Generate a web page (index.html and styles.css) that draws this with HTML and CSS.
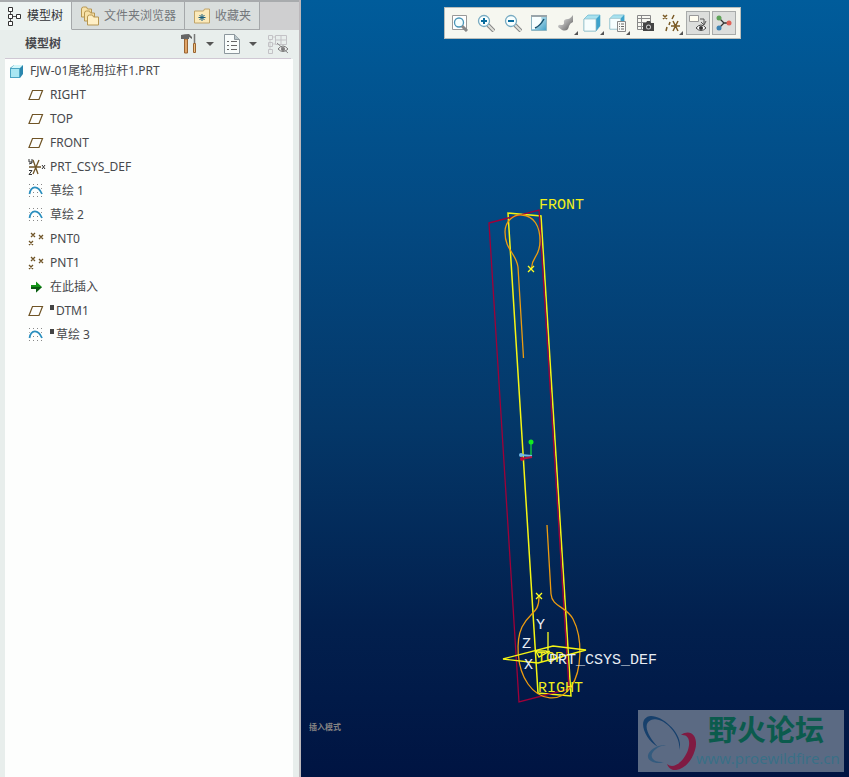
FILE: index.html
```
<!DOCTYPE html>
<html lang="zh-CN">
<head>
<meta charset="utf-8">
<title>模型树</title>
<link rel="stylesheet" href="styles.css">
</head>
<body>
<svg class="defs" aria-hidden="true">
  <defs>
    <linearGradient id="cyan" x1="0" y1="0" x2="1" y2="1"><stop offset="0" stop-color="#f4feff"/><stop offset="1" stop-color="#3f9fc6"/></linearGradient>
    <linearGradient id="metal" x1="0" y1="0" x2="1" y2="1"><stop offset="0" stop-color="#fff"/><stop offset=".5" stop-color="#aaa"/><stop offset="1" stop-color="#555"/></linearGradient>
    <symbol id="plane" viewBox="0 0 16 16"><path d="M4.500 3.500h10L11 12.500H1z" fill="none" stroke="#6f5426" stroke-width="1.200"/></symbol>
    <symbol id="sketch" viewBox="0 0 16 16"><path d="M1 1.500h14M1 5.500h14M1 9.500h14M1 13.500h14" stroke="#888" stroke-dasharray="1 3"/><path d="M1.500 11.500C3 2 11 2 14 11.500" fill="none" stroke="#fff" stroke-width="4"/><path d="M1.500 11C3 2.500 10 2 14 11" fill="none" stroke="#2b8fbe" stroke-width="1.800"/></symbol>
    <symbol id="points" viewBox="0 0 16 16"><path d="M3 2l4 4m0-4L3 6M11 4l4 4m0-4l-4 4M1 10l4 4m0-4l-4 4" stroke="#6f5426" stroke-width="1.300"/></symbol>
    <symbol id="csys" viewBox="0 0 18 18"><path d="M1 9h12M5 2l5 14M11 2L5 16" stroke="#6f5426" stroke-width="1.300"/><path d="M1 1v3h3M4 1v4L1 6M14 7l3 4m0-4l-3 4M1 12.500h3l-3 4h3" fill="none" stroke="#333"/></symbol>
    <symbol id="cube" viewBox="0 0 18 18"><path d="M1 5l4-4h12v11l-4 5H1z" fill="#a8e1ee" stroke="#69b5cf" stroke-width=".7"/><path d="M13 5l4-4v11l-4 5z" fill="#3da3cc"/><path d="M1 5h12v12H1z" fill="#f6fefe" stroke="#94bcc5" stroke-width=".7"/></symbol>
    <symbol id="lens" viewBox="0 0 18 18"><path d="M11 11l6 6" stroke="#858585" stroke-width="4"/><path d="M11 11l6 6" stroke="#e0e0d8" stroke-width="2"/><circle cx="7" cy="7" r="5.500" fill="#f8ffff" stroke="#78abc2" stroke-width="1.300"/></symbol>
  </defs>
</svg>
<main class="app">
  <aside class="panel">
    <nav class="tabs">
      <button class="tab active"><svg width="16" height="20" viewBox="0 0 16 20"><path d="M3.500 6v9M6 10.500h3" stroke="#555"/><path d="M1.500 1.500h4v4h-4zM1.500 8.500h4v4h-4zM1.500 15.500h4v4h-4zM9.500 8.500h4v4h-4z" fill="#fff" stroke="#333"/></svg>模型树</button>
      <button class="tab"><svg width="20" height="20" viewBox="0 0 20 20"><g fill="#f8e2a8" stroke="#b79752"><path d="M1.500 11V3q0-2 2-2h3l1 2h4v8z"/><path d="M4.500 15V7q0-2 2-2h3l1 2h4v8z"/><path d="M7.500 19v-8q0-2 2-2h3l1 2h5v8z" fill="#fff0c6"/></g></svg>文件夹浏览器</button>
      <button class="tab"><svg width="18" height="18" viewBox="0 0 18 18"><path d="M1.500 16V4h9l1-2h5v14z" fill="#fbe9b9" stroke="#c1a468"/><path d="M9 7v7M5.500 10.500h7M6.500 8l5 5m0-5l-5 5" stroke="#165c7e"/></svg>收藏夹</button>
    </nav>
    <header class="tree-head">
      <h1>模型树</h1>
      <div class="tools">
        <button class="tool" aria-label="设置"><svg width="18" height="22" viewBox="0 0 18 22"><path d="M4.500 6h3v14h-3z" fill="#e0a468" stroke="#9a6431"/><path d="M1 6V2q4-1 8-1l3 3v2l-3-2v2H3.500z" fill="#666"/><path d="M14.500 1v9" stroke="#777" stroke-width="1.500"/><path d="M13.500 10.500h2v9h-2z" fill="#edc183" stroke="#9a6431"/></svg><i class="caret"></i></button>
        <button class="tool" aria-label="显示"><svg width="17" height="20" viewBox="0 0 17 20"><path d="M.500 .500h10l5 5v14H.500z" fill="#f8fcfb" stroke="#8c979d"/><path d="M10.500 .500v5h5" fill="#b8c6ca" stroke="#8c979d"/><path d="M7 7.500h6M7 11.500h6M7 15.500h6M3 7.500h2M3 11.500h2M3 15.500h2" stroke="#666"/></svg><i class="caret"></i></button>
        <button class="tool" aria-label="隐藏"><svg width="22" height="20" viewBox="0 0 22 20"><path d="M3 5v11M5 3h3M5 10h3" stroke="#ccc"/><path d="M1.500 1.500h4v4h-4zM1.500 8.500h4v4h-4zM1.500 15.500h4v4h-4zM8.500 1.500h11v9h-11zM14 1.500v9M8.500 6h11" fill="none" stroke="#c3c2c6"/><path d="M11 15q5-6 10 0-5 5-10 0z" fill="#eee" stroke="#777"/><circle cx="16" cy="15" r="2" fill="#777"/><path d="M10 9l11 10" stroke="#888"/></svg></button>
      </div>
    </header>
    <ul class="tree">
      <li class="root"><svg width="15" height="15"><path d="M1 4l4-3h9v9l-3 4H1z" fill="#2b87ae"/><path d="M1.500 4.500h9v9h-9z" fill="#a9e7f2" stroke="#4ba5c3"/><path d="M2 4l3-3h9l-3 3z" fill="#d4f7fa"/></svg>FJW-01尾轮用拉杆1.PRT</li>
      <li><svg width="16" height="16"><use href="#plane"/></svg>RIGHT</li>
      <li><svg width="16" height="16"><use href="#plane"/></svg>TOP</li>
      <li><svg width="16" height="16"><use href="#plane"/></svg>FRONT</li>
      <li class="wide"><svg width="18" height="18"><use href="#csys"/></svg>PRT_CSYS_DEF</li>
      <li><svg width="16" height="16"><use href="#sketch"/></svg>草绘 1</li>
      <li><svg width="16" height="16"><use href="#sketch"/></svg>草绘 2</li>
      <li><svg width="16" height="16"><use href="#points"/></svg>PNT0</li>
      <li><svg width="16" height="16"><use href="#points"/></svg>PNT1</li>
      <li><svg width="16" height="16"><path d="M3 6h5V2.500l6 5.500-6 5.500V10H3z" fill="#149318"/><path d="M3 8h11l-6 5.500V10H3z" fill="#0c5a13"/></svg>在此插入</li>
      <li><svg width="16" height="16"><use href="#plane"/></svg><i class="mark"></i>DTM1</li>
      <li><svg width="16" height="16"><use href="#sketch"/></svg><i class="mark"></i>草绘 3</li>
    </ul>
  </aside>
  <section class="view">
    <svg class="model" viewBox="301 0 548 777" role="img" aria-label="FJW-01">
      <g fill="none" stroke-width="1.300">
        <path d="M571 696L541 216L508 213L538 693Z" stroke="#f5f514" stroke-width="1.500"/>
        <path d="M489 223L539 210L569 689L519 702Z" stroke="#a00038"/>
        <path d="M523.500 358L518 267C516 253 505 250 505 232C505 221 514 214 522 215C534 216 540 226 540 241C540 257 532 256 531.500 268" stroke="#ed9c10"/>
        <path d="M547 525L551 594C552 607 566 606 573 619C583 638 582 671 571 687C560 703 540 701 528 684C516 667 516 640 522 627C530 611 539 614 539 597" stroke="#ed9c10"/>
        <path d="M503 659L553 646L586 650L538 663Z" stroke="#f5f514"/>
        <path d="M528 266l6 6m0-6l-6 6M536 593l6 6m0-6l-6 6M548 632v20M536 651h10l3 3M536 651l3 6 11-6" stroke="#ffff20"/>
        <path d="M531 443v13" stroke="#12d63b"/><path d="M532 456l-11-1" stroke="#72b9e7" stroke-width="2"/><path d="M532 457l-11 2" stroke="#b4123c" stroke-width="2"/>
      </g>
      <circle cx="531" cy="442" r="2.500" fill="#12ed20"/><circle cx="521" cy="455" r="2" fill="#72b9e7"/><circle cx="522" cy="459" r="2" fill="#bd0838"/>
      <g class="yellow"><text x="539" y="209">FRONT</text><text x="537" y="662">TOP</text><text x="538" y="692">RIGHT</text></g>
      <g class="white"><text x="536" y="629">Y</text><text x="522" y="648">Z</text><text x="524" y="669">X</text><text x="549" y="664">PRT_CSYS_DEF</text></g>
    </svg>
    <div class="toolbar">
      <button aria-label="重新调整"><svg width="18" height="18"><path d="M1.500 1.500h14v14h-14z" fill="#fff" stroke="#999"/><circle cx="8" cy="8.500" r="4.500" fill="#f5ffff" stroke="#4995b7" stroke-width="1.300"/><path d="M11 12l5 5" stroke="#888" stroke-width="3"/></svg></button>
      <button aria-label="放大"><svg width="18" height="18"><use href="#lens"/><path d="M4 7h6M7 4v6" stroke="#086c9e" stroke-width="2"/></svg></button>
      <button aria-label="缩小"><svg width="18" height="18"><use href="#lens"/><path d="M4 7h6" stroke="#086c9e" stroke-width="2"/></svg></button>
      <button aria-label="重画"><svg width="18" height="18"><path d="M1.500 1.500h15v15h-15z" fill="url(#cyan)" stroke="#8db5c3"/><path d="M1 2h16" stroke="#9aa5aa" stroke-width="2"/><path d="M2 15V3h9Q14 9 5 15z" fill="#f8ffff"/><path d="M5 14Q10 12 14 5" stroke="#17506c" stroke-width="1.500" fill="none"/></svg></button>
      <button class="more" aria-label="渲染"><svg width="18" height="18"><path d="M1 13q0-3 3-2 3 0 3-2-1-4 4-4 2 0 5-4v7q-3 1-4 4-1 6-7 4z" fill="url(#metal)"/></svg></button>
      <button class="more" aria-label="显示样式"><svg width="18" height="18"><use href="#cube"/></svg></button>
      <button class="more" aria-label="已保存方向"><svg width="18" height="18"><use href="#cube" width="16" height="16"/><path d="M8.500 7.500h8v10h-8z" fill="#f8faf7" stroke="#888"/><path d="M10 10h1m1 0h3M10 12.500h1m1 0h3M10 15h1m1 0h3" stroke="#666"/></svg></button>
      <button aria-label="视图管理器"><svg width="18" height="18"><path d="M1.500 1.500h13v14h-13zM1.500 4.500h13M1.500 8.500h13M1.500 12.500h13M5.500 1.500v14" fill="#f8f8f2" stroke="#888"/><path d="M7 9h3l1-2h3l1 2h3v8H7z" fill="#444"/><circle cx="12.500" cy="13" r="2.500" fill="#ccc"/><circle cx="12.500" cy="13" r="1.500" fill="#333"/></svg></button>
      <button class="more" aria-label="基准显示"><svg width="18" height="18"><path d="M1 1l4 4m0-4L1 5M12 1l-2 4M8 8l-1 3M5 13l-1 4M9 12h9M11 7l5 10M16 7l-5 10" stroke="#7a5a25" stroke-width="1.500"/></svg></button>
      <button class="on" aria-label="注释显示"><svg width="18" height="18"><path d="M.500 1.500h9v6h-9z" fill="#fffdf0" stroke="#999"/><path d="M11 5h4v5M12 8l3 3 2-4" fill="none" stroke="#555"/><path d="M7 14q5-6 10 0-5 5-10 0z" fill="#fff" stroke="#444"/><circle cx="12" cy="14" r="2" fill="#333"/></svg></button>
      <button class="on" aria-label="旋转中心"><svg width="18" height="18"><path d="M4 4l5 5-5 5M9 9h6" stroke="#333" fill="none" stroke-width="1.300"/><circle cx="4" cy="4" r="2.500" fill="#5fa358"/><circle cx="4" cy="14" r="2.500" fill="#3b82b2"/><circle cx="14" cy="9" r="2.500" fill="#e06258"/></svg></button>
    </div>
    <p class="mode">插入模式</p>
    <div class="brand">
      <svg width="60" height="58" viewBox="0 0 60 58"><path d="M41 38C47 24 26 4 13 4C-1 5 5 26 20 35C12 27 3 12 13 8C25 3 44 24 41 38z" fill="#17406c"/><path fill="#801b42" d="M43 23C53 16 61 25 57 38C53 52 43 59 35 58C32 57 30 55 29 52C36 58 46 49 50 38C53 28 50 22 43 23z"/><path fill="#345b7e" d="M28 33C14 33 5 44 13 49C18 52 23 51 26 50C16 51 11 45 15 40C19 35 23 34 28 33z"/></svg>
      <div><strong>野火论坛</strong><span>www.proewildfire.cn</span></div>
    </div>
  </section>
</main>
</body>
</html>
```
FILE: styles.css
```
* { box-sizing: border-box; }
body {
  margin: 0;
  font: 12px/24px "Noto Sans", "Noto Sans CJK SC", sans-serif;
  color: #47484c;
}
button { font: inherit; color: inherit; border: 0; padding: 0; background: none; }
svg { display: block; flex: none; }
.defs { position: absolute; width: 0; height: 0; }
.app { display: grid; grid-template-columns: 301px 1fr; min-height: 100vh; }

.panel {
  display: flex;
  flex-direction: column;
  background: #e8eeec;
  border-right: 2px solid #bcb8bb;
}
.tabs { display: flex; height: 30px; background: #cfcfd0; border-top: 2px solid #a8abad; }
.tab {
  display: flex;
  align-items: center;
  gap: 4px;
  padding: 0 8px 0 7px;
  color: #74777b;
  background: #d9dedd;
  border-right: 1px solid #a5a8aa;
  border-bottom: 1px solid #a5a8aa;
}
.tab.active { color: #333438; background: #edf3f1; border-bottom-color: #edf3f1; }
.tab + .tab { padding-left: 8px; }
.tree-head {
  display: flex;
  align-items: center;
  justify-content: space-between;
  height: 29px;
  margin: 0 8px 0 5px;
  padding: 0 2px 0 20px;
  border-bottom: 1px solid #d0c8d4;
}
h1 { margin: 0; font-size: 12px; font-weight: bold; }
.tools { display: flex; gap: 10px; }
.tool { display: flex; align-items: center; gap: 8px; }
.caret { border: 4px solid transparent; border-top-color: #555; border-bottom: 0; }
.tree { flex: 1; margin: 0 6px 0 5px; padding: 0; list-style: none; background: #fdfefd; }
.tree li { display: flex; align-items: center; gap: 6px; height: 24px; padding-left: 23px; }
.tree .root { padding-left: 4px; }
.tree .wide { gap: 4px; }
.mark { width: 4px; height: 5px; margin: 0 -4px 8px 0; background: #444; }

.view {
  position: relative;
  overflow: hidden;
  background: linear-gradient(#005c9b, #034a83 27%, #043768 55%, #02204e 80%, #001442);
}
.model { position: absolute; width: 100%; height: 100%; font: 15px "Liberation Mono", monospace; }
.yellow { fill: #f0f01c; }
.white { fill: #e8edf3; }
.toolbar {
  position: absolute;
  top: 7px;
  left: 143px;
  display: flex;
  align-items: center;
  justify-content: space-between;
  width: 297px;
  height: 32px;
  padding: 0 4px 0 3px;
  background: #f6f7f0;
  border: 1px solid #b9bdba;
}
.toolbar button { position: relative; display: grid; place-items: center; width: 24px; height: 24px; }
.toolbar .on { background: #dcdedc; border: 1px solid #a8abaa; }
.more::after {
  content: "";
  position: absolute;
  right: 0;
  bottom: 0;
  border: 2px solid #555;
  border-top-color: transparent;
  border-left-color: transparent;
}
.mode {
  position: absolute;
  left: 8px;
  bottom: 42px;
  margin: 0;
  font-size: 8px;
  font-weight: bold;
  line-height: 16px;
  color: #858382;
}
.brand {
  position: absolute;
  right: 5px;
  bottom: 5px;
  display: flex;
  align-items: center;
  width: 206px;
  height: 62px;
  background: #5b6a83;
}
.brand div { display: flex; flex-direction: column; margin-left: -2px; }
.brand strong { margin-left: 12px; font-size: 29px; line-height: 34px; color: #0b5b4d; }
.brand span { font-family: "Open Sans", sans-serif; font-size: 15px; line-height: 22px; color: #387087; }
```
